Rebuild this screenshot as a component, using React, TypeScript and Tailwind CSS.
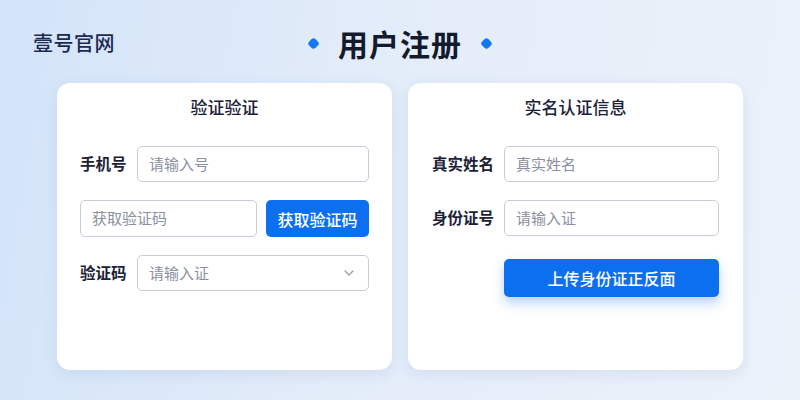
import React from 'react';

const cjk = { fontFamily: '"Noto Sans CJK SC", "Noto Sans", sans-serif' };

function Field({ label, placeholder, labelWidth, select }: { label: string; placeholder: string; labelWidth: string; select?: boolean }) {
  return (
    <div className="flex items-center h-[36px]">
      <span className={`${labelWidth} shrink-0 text-[15.5px] font-bold text-[#1b2238]`}>{label}</span>
      <div className="flex-1 h-full flex items-center justify-between border border-[#c9cdd8] rounded-[5px] bg-white pl-[11px] pr-[12px]">
        <span className="text-[15px] text-[#8b90a1]">{placeholder}</span>
        {select && (
          <svg width="14" height="14" viewBox="0 0 14 14" fill="none" stroke="#9aa0ad" strokeWidth="1.4" strokeLinecap="round" strokeLinejoin="round">
            <path d="M3 5l4 4 4-4" />
          </svg>
        )}
      </div>
    </div>
  );
}

export default function App() {
  return (
    <div
      className="w-[800px] h-[400px] overflow-hidden bg-[linear-gradient(100deg,#d3e4f9_0%,#e3ecf9_45%,#ecf2fa_100%)]"
      style={cjk}
    >
      {/* Header */}
      <div className="h-[83px] grid grid-cols-[1fr_auto_1fr] items-center pt-[3px]">
        <div className="pl-[33px] text-[20px] font-medium text-[#1c2a52] tracking-[0.5px]">壹号官网</div>
        <div className="flex items-center gap-[20px]">
          <span className="w-[9px] h-[9px] rounded-[3px] rotate-45 bg-[#1677f2]" />
          <h1 className="text-[30px] font-bold text-[#141a2e] tracking-[1px]">用户注册</h1>
          <span className="w-[9px] h-[9px] rounded-[3px] rotate-45 bg-[#1677f2]" />
        </div>
        <div />
      </div>

      {/* Cards */}
      <div className="grid grid-cols-2 gap-4 px-[57px]">
        {/* Left card */}
        <div className="h-[287px] bg-white rounded-[13px] shadow-[0_4px_14px_rgba(120,150,200,0.18)] px-[23px] pt-[12px]">
          <h2 className="text-center text-[17px] leading-[24px] font-medium text-[#1b2238]">验证验证</h2>
          <div className="mt-[27px] flex flex-col gap-[18px]">
            <Field label="手机号" placeholder="请输入号" labelWidth="w-[57px]" />
            <div className="flex items-center h-[37px] gap-[9px]">
              <div className="w-[177px] h-full flex items-center border border-[#c9cdd8] rounded-[5px] pl-[11px]">
                <span className="text-[15px] text-[#8b90a1]">获取验证码</span>
              </div>
              <button className="flex-1 h-full rounded-[5px] bg-[#0c6ff0] text-white text-[16px] font-medium">获取验证码</button>
            </div>
            <Field label="验证码" placeholder="请输入证" labelWidth="w-[57px]" select />
          </div>
        </div>

        {/* Right card */}
        <div className="h-[287px] bg-white rounded-[13px] shadow-[0_4px_14px_rgba(120,150,200,0.18)] px-[24px] pt-[12px]">
          <h2 className="text-center text-[17px] leading-[24px] font-medium text-[#1b2238]">实名认证信息</h2>
          <div className="mt-[27px] flex flex-col gap-[18px]">
            <Field label="真实姓名" placeholder="真实姓名" labelWidth="w-[72px]" />
            <Field label="身份证号" placeholder="请输入证" labelWidth="w-[72px]" />
          </div>
          <div className="pl-[72px] mt-[23px]">
            <button className="w-full h-[38px] rounded-[5px] bg-[#0c6ff0] text-white text-[16px] font-medium shadow-[0_6px_12px_rgba(20,110,240,0.3)]">
              上传身份证正反面
            </button>
          </div>
        </div>
      </div>
    </div>
  );
}
